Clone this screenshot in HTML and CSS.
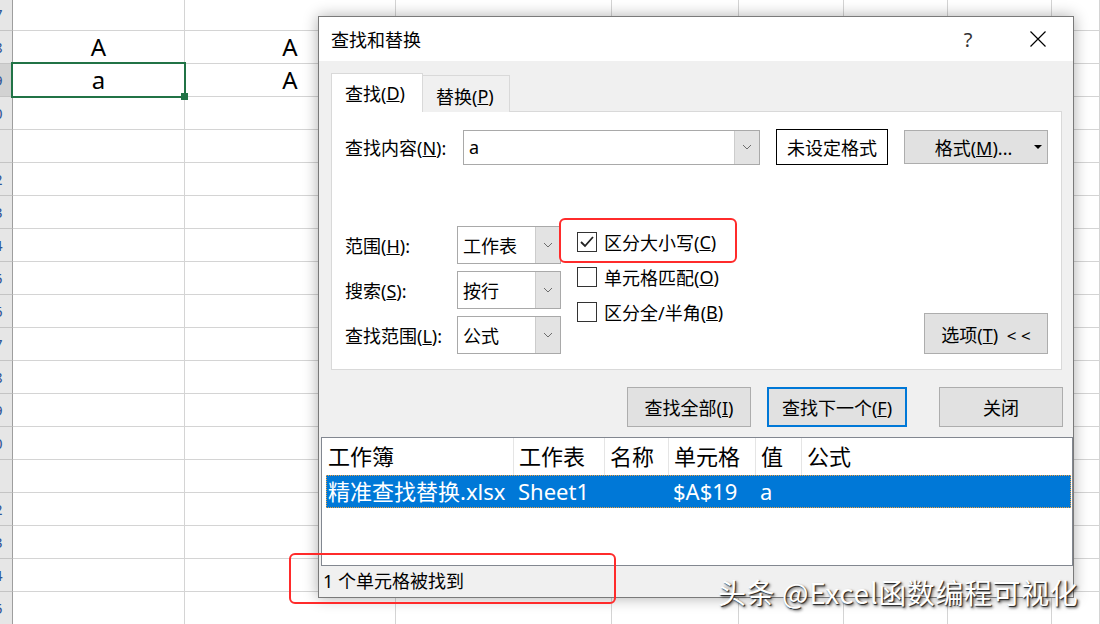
FILE: index.html
```html
<!DOCTYPE html>
<html lang="zh-CN">
<head>
    <meta charset="UTF-8">
    <title>查找和替换</title>
    <link rel="stylesheet" href="styles.css">
</head>
<body>
    <div class="sheet" id="sheet"></div>

    <div class="dialog">
        <div class="titlebar">
            <span class="title">查找和替换</span>
            <span class="tb-btn help">?</span>
            <span class="tb-btn">
                <svg width="16" height="16" viewBox="0 0 16 16"><path d="M0.5 0.5L15.5 15.5M15.5 0.5L0.5 15.5" stroke="#000" stroke-width="1.2" fill="none"/></svg>
            </span>
        </div>

        <div class="dlg-body">
            <div class="tabs">
                <div class="tab active">查找(<u>D</u>)</div>
                <div class="tab">替换(<u>P</u>)</div>
            </div>

            <div class="panel">
                <div class="find-row">
                    <span class="find-label">查找内容(<u>N</u>):</span>
                    <div class="combo find-input">
                        <span class="value">a</span>
                        <span class="drop"><svg width="10" height="6" viewBox="0 0 10 6"><polyline points="1,1 5,5 9,1" stroke="#6d6d6d" fill="none"/></svg></span>
                    </div>
                    <div class="fmt-preview">未设定格式</div>
                    <button class="btn fmt-btn">
                        <span></span>
                        <span>格式(<u>M</u>)...</span>
                        <svg width="8" height="5" viewBox="0 0 8 5"><polygon points="0,0 8,0 4,4" fill="#000"/></svg>
                    </button>
                </div>

                <div class="opts">
                    <div class="opt-grid">
                        <span>范围(<u>H</u>):</span>
                        <div class="combo select">
                            <span class="value">工作表</span>
                            <span class="drop"><svg width="10" height="6" viewBox="0 0 10 6"><polyline points="1,1 5,5 9,1" stroke="#6d6d6d" fill="none"/></svg></span>
                        </div>
                        <span>搜索(<u>S</u>):</span>
                        <div class="combo select">
                            <span class="value">按行</span>
                            <span class="drop"><svg width="10" height="6" viewBox="0 0 10 6"><polyline points="1,1 5,5 9,1" stroke="#6d6d6d" fill="none"/></svg></span>
                        </div>
                        <span>查找范围(<u>L</u>):</span>
                        <div class="combo select">
                            <span class="value">公式</span>
                            <span class="drop"><svg width="10" height="6" viewBox="0 0 10 6"><polyline points="1,1 5,5 9,1" stroke="#6d6d6d" fill="none"/></svg></span>
                        </div>
                    </div>

                    <div class="checks">
                        <div class="check">
                            <span class="box"><svg width="18" height="18" viewBox="0 0 18 18"><polyline points="3,9 7,13 15,4" stroke="#222" stroke-width="1.8" fill="none"/></svg></span>
                            区分大小写(<u>C</u>)
                        </div>
                        <div class="check"><span class="box"></span>单元格匹配(<u>O</u>)</div>
                        <div class="check"><span class="box"></span>区分全/半角(<u>B</u>)</div>
                    </div>

                    <button class="btn opt-btn">选项(<u>T</u>) <span class="chev">&lt; &lt;</span></button>
                </div>
            </div>

            <div class="actions">
                <button class="btn">查找全部(<u>I</u>)</button>
                <button class="btn primary">查找下一个(<u>F</u>)</button>
                <button class="btn close-btn">关闭</button>
            </div>
        </div>

        <div class="results">
            <div class="res-head">
                <span>工作簿</span>
                <span>工作表</span>
                <span>名称</span>
                <span>单元格</span>
                <span>值</span>
                <span>公式</span>
            </div>
            <div class="res-row">
                <span>精准查找替换.xlsx</span>
                <span>Sheet1</span>
                <span></span>
                <span>$A$19</span>
                <span>a</span>
                <span></span>
            </div>
        </div>

        <div class="status">1 个单元格被找到</div>
    </div>

    <div class="mark mark-case"></div>
    <div class="mark mark-status"></div>

    <div class="watermark">头条 @Excel函数编程可视化</div>

    <script>
        // build the worksheet behind the dialog
        const data = { 18: ['A', 'A'], 19: ['a', 'A'] };
        const sheet = document.getElementById('sheet');

        for (let r = 17; r <= 35; r++) {
            const row = document.createElement('div');
            row.className = 'sheet-row' + (r === 19 ? ' active' : '');
            const vals = data[r] || [];
            let html = '<div class="row-head"><span>' + r + '</span></div>';
            for (let c = 0; c < 8; c++) {
                const cls = (r === 19 && c === 0) ? 'cell active' : 'cell';
                html += '<div class="' + cls + '">' + (vals[c] || '') + '</div>';
            }
            row.innerHTML = html;
            sheet.appendChild(row);
        }
    </script>
</body>
</html>
```

FILE: styles.css
```css
* {
    box-sizing: border-box;
}

body {
    margin: 0;
    width: 1100px;
    height: 624px;
    overflow: hidden;
    position: relative;
    background: #ffffff;
    color: #000000;
    font-family: "Noto Sans", "Noto Sans CJK SC", sans-serif;
}

/* worksheet */
.sheet {
    margin-top: -2px;
}

.sheet-row {
    display: grid;
    grid-template-columns: 13px 172px 211px 216px 127px 105px 104px 104px 1fr;
    height: 33px;
}

.sheet-row > div {
    border-right: 1px solid #d4d4d4;
    border-bottom: 1px solid #d4d4d4;
}

.sheet-row > .row-head {
    background: #e6e6e6;
    border-right-color: #9e9e9e;
    border-bottom-color: #c4c4c4;
    overflow: hidden;
    display: flex;
    justify-content: flex-end;
}

.sheet-row.active > .row-head {
    background: #d2d2d2;
}

.row-head span {
    flex: none;
    width: 36px;
    text-align: center;
    font-size: 15px;
    line-height: 32px;
    color: #2f5597;
}

.cell {
    position: relative;
    font-size: 24px;
    line-height: 31px;
    text-align: center;
}

.cell.active::before {
    content: "";
    position: absolute;
    left: -2px;
    top: -2px;
    right: -2px;
    bottom: -2px;
    border: 2px solid #217346;
    z-index: 1;
}

.cell.active::after {
    content: "";
    position: absolute;
    right: -4px;
    bottom: -4px;
    width: 7px;
    height: 7px;
    background: #217346;
    z-index: 2;
}

/* dialog */
.dialog {
    position: absolute;
    left: 318px;
    top: 16px;
    width: 756px;
    border: 1px solid #7a7a7a;
    background: #f0f0f0;
    box-shadow: 0 0 14px rgba(0, 0, 0, 0.32);
    font-size: 18px;
    z-index: 5;
}

.titlebar {
    height: 44px;
    background: #ffffff;
    display: flex;
    align-items: center;
    padding-left: 12px;
}

.title {
    flex: 1;
}

.tb-btn {
    width: 70px;
    height: 44px;
    display: flex;
    align-items: center;
    justify-content: center;
}

.help {
    font-size: 20px;
    color: #333333;
}

.dlg-body {
    padding: 12px 11px 0 12px;
}

.tabs {
    display: flex;
    align-items: flex-end;
    margin-bottom: -1px;
}

.tab {
    height: 37px;
    width: 88px;
    margin-left: -1px;
    padding: 3px 0 0 13px;
    border: 1px solid #d9d9d9;
    border-bottom: none;
    display: flex;
    align-items: center;
    background: #f0f0f0;
}

.tab.active {
    height: 39px;
    width: 92px;
    margin-left: 0;
    padding-top: 0;
    background: #ffffff;
    position: relative;
    z-index: 1;
}

.panel {
    background: #ffffff;
    border: 1px solid #d9d9d9;
    padding: 17px 13px 15px 13px;
}

.find-row {
    display: flex;
    align-items: center;
    height: 36px;
}

.find-label {
    width: 118px;
}

.combo {
    display: flex;
    border: 1px solid #a9a9a9;
    background: #ffffff;
}

.combo .value {
    flex: 1;
    padding-left: 5px;
    display: flex;
    align-items: center;
}

.combo .drop {
    width: 25px;
    background: #e3e3e3;
    border-left: 1px solid #cccccc;
    display: flex;
    align-items: center;
    justify-content: center;
}

.find-input {
    width: 297px;
    height: 35px;
}

.fmt-preview {
    margin-left: 16px;
    width: 112px;
    height: 36px;
    border: 1px solid #000000;
    display: flex;
    align-items: center;
    justify-content: center;
}

.btn {
    font: inherit;
    color: #000000;
    background: #e1e1e1;
    border: 1px solid #adadad;
    padding: 0;
}

.fmt-btn {
    margin-left: 16px;
    width: 144px;
    height: 34px;
    display: grid;
    grid-template-columns: 1fr auto 1fr;
    align-items: center;
    padding-right: 5px;
}

.fmt-btn svg {
    justify-self: end;
}

.opts {
    display: flex;
    align-items: flex-start;
    margin-top: 61px;
}

.opt-grid {
    display: grid;
    grid-template-columns: 112px 104px;
    row-gap: 7px;
    align-items: center;
}

.select {
    height: 38px;
}

.checks {
    margin-left: 16px;
    margin-top: -2px;
}

.check {
    display: flex;
    align-items: center;
    height: 35px;
}

.box {
    width: 20px;
    height: 20px;
    margin-right: 7px;
    border: 1px solid #333333;
    background: #ffffff;
    display: flex;
    align-items: center;
    justify-content: center;
}

.opt-btn {
    margin-left: auto;
    align-self: flex-end;
    width: 124px;
    height: 41px;
}

.opt-btn .chev {
    margin-left: 4px;
    font-size: 17px;
}

.actions {
    display: flex;
    justify-content: flex-end;
    gap: 16px;
    margin-top: 17px;
    margin-right: -1px;
}

.actions .btn {
    width: 124px;
    height: 40px;
}

.actions .primary {
    width: 140px;
    border: 2px solid #0078d7;
}

.actions .close-btn {
    margin-left: 16px;
}

/* results list */
.results {
    margin: 10px 0 0 2px;
    height: 129px;
    border: 1px solid #828790;
    background: #ffffff;
    font-size: 22px;
}

.res-head {
    display: grid;
    grid-template-columns: 192px 91px 64px 87px 46px 1fr;
    height: 37px;
}

.res-head span {
    border-right: 1px solid #e5e5e5;
    padding-left: 5px;
    line-height: 37px;
    white-space: nowrap;
}

.res-head span:first-child {
    padding-left: 6px;
}

.res-head span:last-child {
    border-right: none;
}

.res-row {
    margin: 0 1px 0 4px;
    height: 33px;
    display: grid;
    grid-template-columns: 187px 91px 64px 87px 46px 1fr;
    background: #0078d7;
    color: #ffffff;
    outline: 1px dotted #f0a040;
    outline-offset: -1px;
}

.res-row span {
    padding-left: 5px;
    line-height: 33px;
    white-space: nowrap;
}

.res-row span:first-child {
    padding-left: 2px;
}

.status {
    height: 31px;
    line-height: 31px;
    padding-left: 4px;
    background: #f0f0f0;
}

/* annotations on top of the screenshot */
.mark {
    position: absolute;
    border: 2px solid #ff2b2b;
    border-radius: 6px;
    z-index: 10;
}

.mark-case {
    left: 559px;
    top: 218px;
    width: 178px;
    height: 45px;
}

.mark-status {
    left: 289px;
    top: 553px;
    width: 327px;
    height: 51px;
}

.watermark {
    position: absolute;
    left: 718px;
    top: 574px;
    font-family: "Noto Sans CJK SC", sans-serif;
    font-size: 28px;
    line-height: 36px;
    letter-spacing: 0.6px;
    color: #ffffff;
    text-shadow: 1px 1px 1px #222222, 2px 2px 3px rgba(0, 0, 0, 0.6);
    z-index: 11;
}
```
